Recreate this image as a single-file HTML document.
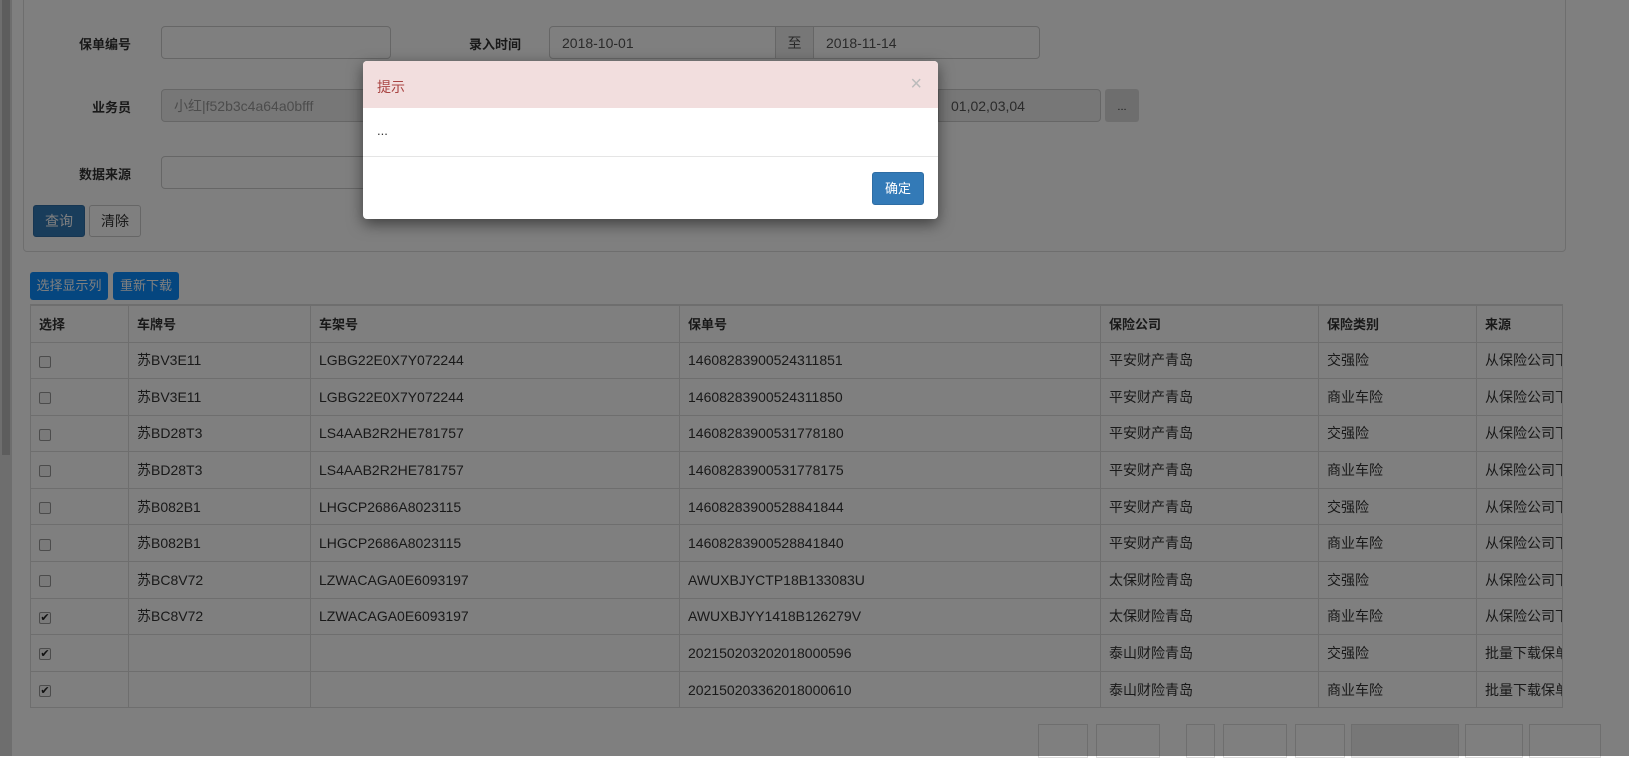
<!DOCTYPE html>
<html><head><meta charset="utf-8">
<style>
*{box-sizing:border-box;margin:0;padding:0}
body{width:1629px;height:756px;overflow:hidden;background:#fff;font-family:"Liberation Sans","Noto Sans CJK SC",sans-serif;font-size:13px;color:#333;position:relative}
.abs{position:absolute}
.sb{left:0;top:0;width:12px;height:756px;background:#dcdcdc}
.sb2{left:2px;top:0;width:8px;height:455px;background:#bbb}
.panel{left:23px;top:-5px;width:1543px;height:257px;border:1px solid #ddd;border-radius:4px;background:#fff}
.lbl{font-weight:bold;font-size:13px;text-align:right;width:110px}
.inp{border:1px solid #ccc;border-radius:4px;height:33px;background:#fff;padding:7px 12px;font-size:14px;color:#555;line-height:18px}
.dis{background:#eee}
.btn{border-radius:3px;font-size:13px;text-align:center;color:#fff}
table{position:absolute;left:30px;top:304px;border-collapse:collapse;width:1532px;table-layout:fixed;border-top:2px solid #ddd}
td,th{border:1px solid #ddd;height:36.6px;padding:0 8px;text-align:left;font-size:14px;white-space:nowrap;overflow:hidden}
th{font-weight:bold;height:37px;font-size:13px}
td{color:#333}
.cb{display:inline-block;width:12px;height:12px;border:1px solid #999;border-radius:2px;background:#f4f4f4;vertical-align:middle;position:relative;font-size:11px;line-height:10px;text-align:center;color:#222}
.pg{top:724px;height:34px;border:1px solid #ddd;background:#fff}
.ov{left:0;top:0;width:1629px;height:756px;background:rgba(0,0,0,.5)}
.modal{left:363px;top:61px;width:575px;height:158px;background:#fff;border-radius:4px;box-shadow:0 5px 15px rgba(0,0,0,.5);overflow:hidden}
</style></head><body>
<div class="abs sb"></div><div class="abs sb2"></div>
<div class="abs panel"></div>
<div class="abs lbl" style="left:21px;top:34px">保单编号</div>
<div class="abs inp" style="left:161px;top:26px;width:230px"></div>
<div class="abs lbl" style="left:411px;top:34px">录入时间</div>
<div class="abs inp" style="left:549px;top:26px;width:227px;border-radius:4px 0 0 4px">2018-10-01</div>
<div class="abs inp dis" style="left:775px;top:26px;width:39px;border-radius:0;padding:7px 0;text-align:center">至</div>
<div class="abs inp" style="left:813px;top:26px;width:227px;border-radius:0 4px 4px 0">2018-11-14</div>
<div class="abs lbl" style="left:21px;top:97px">业务员</div>
<div class="abs inp dis" style="left:161px;top:89px;width:400px;color:#999">小红|f52b3c4a64a0bfff</div>
<div class="abs inp dis" style="left:938px;top:89px;width:163px;border-radius:0 4px 4px 0">01,02,03,04</div>
<div class="abs" style="left:1105px;top:89px;width:34px;height:33px;background:#ddd;border-radius:3px;text-align:center;line-height:36px;font-size:11px">...</div>
<div class="abs lbl" style="left:21px;top:164px">数据来源</div>
<div class="abs inp" style="left:161px;top:156px;width:400px"></div>
<div class="abs btn" style="left:33px;top:205px;width:52px;height:32px;background:#337ab7;border:1px solid #2e6da4;line-height:30px;font-size:14px">查询</div>
<div class="abs btn" style="left:89px;top:205px;width:52px;height:32px;background:#fff;border:1px solid #ccc;color:#333;line-height:30px;font-size:14px">清除</div>
<div class="abs btn" style="left:30px;top:272px;width:78px;height:28px;background:#0a8cff;line-height:28px">选择显示列</div>
<div class="abs btn" style="left:113px;top:272px;width:66px;height:28px;background:#0a8cff;line-height:28px">重新下载</div>
<table>
<colgroup><col style="width:98px"><col style="width:182px"><col style="width:369px"><col style="width:421px"><col style="width:218px"><col style="width:158px"><col style="width:86px"></colgroup>
<tr><th>选择</th><th>车牌号</th><th>车架号</th><th>保单号</th><th>保险公司</th><th>保险类别</th><th>来源</th></tr>
<tr><td><span class="cb"></span></td><td>苏BV3E11</td><td>LGBG22E0X7Y072244</td><td>14608283900524311851</td><td>平安财产青岛</td><td>交强险</td><td>从保险公司下载</td></tr>
<tr><td><span class="cb"></span></td><td>苏BV3E11</td><td>LGBG22E0X7Y072244</td><td>14608283900524311850</td><td>平安财产青岛</td><td>商业车险</td><td>从保险公司下载</td></tr>
<tr><td><span class="cb"></span></td><td>苏BD28T3</td><td>LS4AAB2R2HE781757</td><td>14608283900531778180</td><td>平安财产青岛</td><td>交强险</td><td>从保险公司下载</td></tr>
<tr><td><span class="cb"></span></td><td>苏BD28T3</td><td>LS4AAB2R2HE781757</td><td>14608283900531778175</td><td>平安财产青岛</td><td>商业车险</td><td>从保险公司下载</td></tr>
<tr><td><span class="cb"></span></td><td>苏B082B1</td><td>LHGCP2686A8023115</td><td>14608283900528841844</td><td>平安财产青岛</td><td>交强险</td><td>从保险公司下载</td></tr>
<tr><td><span class="cb"></span></td><td>苏B082B1</td><td>LHGCP2686A8023115</td><td>14608283900528841840</td><td>平安财产青岛</td><td>商业车险</td><td>从保险公司下载</td></tr>
<tr><td><span class="cb"></span></td><td>苏BC8V72</td><td>LZWACAGA0E6093197</td><td>AWUXBJYCTP18B133083U</td><td>太保财险青岛</td><td>交强险</td><td>从保险公司下载</td></tr>
<tr><td><span class="cb">✔</span></td><td>苏BC8V72</td><td>LZWACAGA0E6093197</td><td>AWUXBJYY1418B126279V</td><td>太保财险青岛</td><td>商业车险</td><td>从保险公司下载</td></tr>
<tr><td><span class="cb">✔</span></td><td></td><td></td><td>202150203202018000596</td><td>泰山财险青岛</td><td>交强险</td><td>批量下载保单</td></tr>
<tr><td><span class="cb">✔</span></td><td></td><td></td><td>202150203362018000610</td><td>泰山财险青岛</td><td>商业车险</td><td>批量下载保单</td></tr>
</table>
<div class="abs pg" style="left:1038px;width:50px"></div>
<div class="abs pg" style="left:1096px;width:64px"></div>
<div class="abs pg" style="left:1186px;width:29px"></div>
<div class="abs pg" style="left:1223px;width:64px"></div>
<div class="abs pg" style="left:1295px;width:50px"></div>
<div class="abs pg" style="left:1351px;width:108px;background:#eee"></div>
<div class="abs pg" style="left:1465px;width:58px"></div>
<div class="abs pg" style="left:1529px;width:72px"></div>
<div class="abs ov"></div>
<div class="abs modal">
  <div style="height:47px;background:#f2dede;color:#a94442;font-size:14px;padding:16px 14px">提示<span style="position:absolute;right:16px;top:12px;color:#bbb;font-size:20px;font-weight:normal">×</span></div>
  <div style="height:49px;border-bottom:1px solid #e5e5e5;padding:16px 14px;font-size:13px;line-height:14px">...</div>
  <div class="abs btn" style="left:509px;top:111px;width:52px;height:33px;background:#337ab7;border:1px solid #2e6da4;line-height:31px;font-size:13px">确定</div>
</div>
</body></html>
